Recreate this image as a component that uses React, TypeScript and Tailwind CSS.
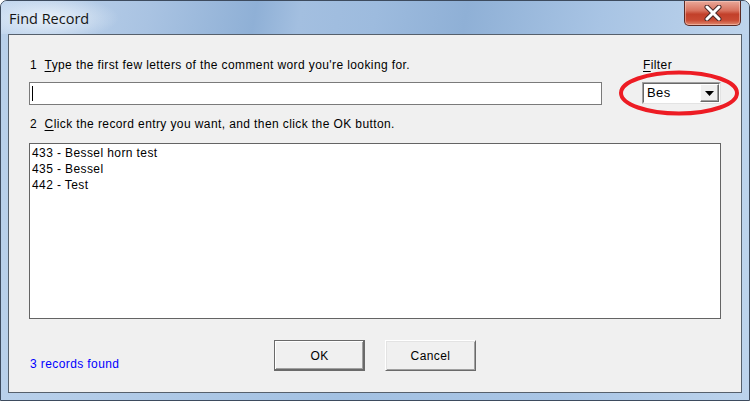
const ui = "font-['Liberation_Sans',Arial,sans-serif] text-[12px] leading-[16px] tracking-[0.4px] text-[#000]";

const records = ["433 - Bessel horn test", "435 - Bessel", "442 - Test"];

const CloseButton = () => (
  <div className="mr-[8px] flex h-[25px] w-[57px] items-center justify-center rounded-b-[5px] border border-t-0 border-[#5b2a24] bg-[linear-gradient(to_bottom,#e9a99a_0%,#d8725e_40%,#c2402a_55%,#c94a33_80%,#e08a6f_100%)] shadow-[inset_0_0_0_1px_rgba(255,220,210,0.45)]">
    <svg width="18" height="16" viewBox="0 0 18 16">
      <path d="M3 2 L15 14 M15 2 L3 14" stroke="#4a2a28" strokeWidth="5" strokeLinecap="round" />
      <path d="M3 2 L15 14 M15 2 L3 14" stroke="#ffffff" strokeWidth="3" strokeLinecap="round" />
    </svg>
  </div>
);

const DialogButton = ({ label, isDefault }: { label: string; isDefault?: boolean }) => (
  <button
    className={
      "h-[31px] w-[91px] bg-[#f0f0f0] " +
      ui +
      (isDefault
        ? " border border-[#6a6a6a] shadow-[inset_-1px_-1px_0_#6a6a6a,inset_1px_1px_0_#ffffff,inset_-2px_-2px_0_#a0a0a0]"
        : " border border-t-[#ffffff] border-l-[#ffffff] border-r-[#6a6a6a] border-b-[#6a6a6a] shadow-[inset_1px_1px_0_#e3e3e3,inset_-1px_-1px_0_#a0a0a0]")
    }
  >
    {label}
  </button>
);

export default function App() {
  return (
    <div className="relative flex h-[401px] w-[750px] flex-col overflow-hidden rounded-t-[7px] border border-[#3d4b5e] bg-[linear-gradient(to_right,#b9d0ea,#a3c1e2_45%,#a9c5e5_75%,#bcd3ec)]">
      <div className="flex h-[33px] items-start bg-[radial-gradient(ellipse_70px_22px_at_48px_17px,rgba(240,246,252,0.85),transparent),linear-gradient(100deg,#c3d7ee_0%,#a9c3e2_20%,#8fb0d6_34%,#a3bfe0_40%,#9dbbde_50%,#8fb0d6_62%,#a8c4e4_80%,#bed4ec_100%)]">
        <div className="mt-[9px] pl-[8px] font-['Open_Sans','Noto_Sans',sans-serif] text-[14.5px] leading-[18px] text-[#141414]">
          Find Record
        </div>
        <div className="ml-auto">
          <CloseButton />
        </div>
      </div>

      <div className="mx-[7px] mb-[7px] flex flex-1 flex-col border border-[#56606c] bg-[#f0f0f0] px-[20px]">
        <div className="flex">
          <div className="flex flex-1 flex-col">
            <div className={"mt-[22px] pl-[1px] " + ui}>
              1&nbsp;&nbsp;<span className="underline underline-offset-[2px]">T</span>ype the first few letters of the comment word you're looking for.
            </div>
            <div className="mt-[9px] flex h-[23px] items-center border border-[#7a7a7a] bg-white pl-[2px]">
              <div className="h-[15px] w-[1px] bg-black" />
            </div>
          </div>
          <div className="ml-[40px] flex w-[79px] flex-col">
            <div className={"mt-[22px] pl-[1px] " + ui}>
              <span className="underline underline-offset-[2px]">F</span>ilter
            </div>
            <div className="mt-[9px] flex h-[22px] border border-t-[#a0a0a0] border-l-[#a0a0a0] border-r-[#e3e3e3] border-b-[#e3e3e3] bg-white">
              <div className="flex flex-1 border border-t-[#696969] border-l-[#696969] border-r-white border-b-white">
                <div className={"flex flex-1 items-center pl-[3px] text-[13px] " + ui}>Bes</div>
                <div className="flex w-[19px] items-center justify-center border border-t-white border-l-white border-r-[#696969] border-b-[#696969] bg-[#f0f0f0] shadow-[inset_-1px_-1px_0_#a0a0a0]">
                  <svg width="9" height="5" viewBox="0 0 9 5">
                    <path d="M0 0 H9 L4.5 5 Z" fill="#000" />
                  </svg>
                </div>
              </div>
            </div>
          </div>
        </div>

        <div className={"mt-[11px] pl-[1px] " + ui}>
          2&nbsp;&nbsp;<span className="underline underline-offset-[2px]">C</span>lick the record entry you want, and then click the OK button.
        </div>

        <div className="mt-[11px] flex h-[176px] flex-col border border-[#646464] bg-white pl-[2px] pt-[1px]">
          {records.map((r) => (
            <div key={r} className={ui}>
              {r}
            </div>
          ))}
        </div>

        <div className="mt-[21px] grid grid-cols-[1fr_auto_1fr]">
          <div className={"mt-[16px] pl-[1px] text-[#0000ff] " + ui.replace("text-[#000]", "")}>3 records found</div>
          <div className="flex gap-[20px]">
            <DialogButton label="OK" isDefault />
            <DialogButton label="Cancel" />
          </div>
          <div />
        </div>
      </div>

      <svg className="pointer-events-none absolute left-[617px] top-[69px]" width="122" height="46" viewBox="0 0 122 46">
        <ellipse cx="61" cy="23" rx="58" ry="20.5" fill="none" stroke="#ed1c24" strokeWidth="4" />
      </svg>
    </div>
  );
}
